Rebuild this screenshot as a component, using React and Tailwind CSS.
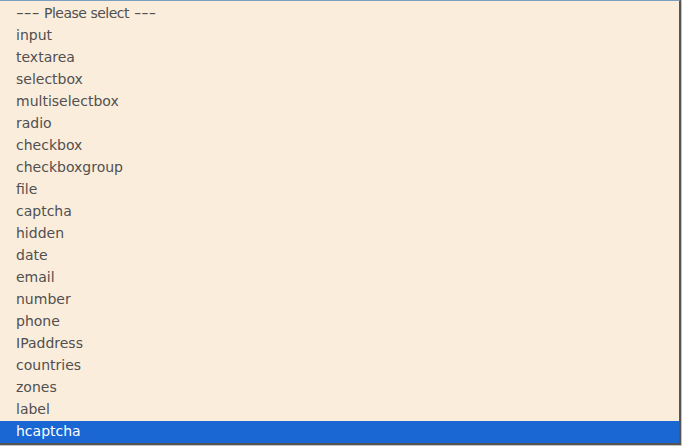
export default function App() {
  const items = [
    "input",
    "textarea",
    "selectbox",
    "multiselectbox",
    "radio",
    "checkbox",
    "checkboxgroup",
    "file",
    "captcha",
    "hidden",
    "date",
    "email",
    "number",
    "phone",
    "IPaddress",
    "countries",
    "zones",
    "label",
    "hcaptcha",
  ];
  const font = { fontFamily: '"DejaVu Sans", sans-serif' };
  return (
    <div className="w-[682px] h-[446px] bg-[#c4c4c4] overflow-hidden">
      <div className="w-[681px] bg-[#fbeddc] border-t border-t-[#7c9cc0] border-r-2 border-r-[#555555] border-b-2 border-b-[#555555] pt-[2px]">
        <div
          className="h-[22px] flex items-center pb-[2px] pl-[16px] text-[14px] text-[#505050]"
          style={font}
        >
          <span className="inline-block w-[24px] origin-left scale-x-[1.55]">---</span>
          <span className="ml-[4px] tracking-[-0.5px]">Please select</span>
          <span className="ml-[5px] inline-block w-[22px] origin-left scale-x-[1.45]">---</span>
        </div>
        {items.map((it, i) => {
          const sel = i === items.length - 1;
          return (
            <div
              key={it}
              className={
                "h-[22px] flex items-center pb-[2px] pl-[16px] text-[14px] " +
                (sel ? "bg-[#1a66d3] text-white" : "text-[#505050]")
              }
              style={font}
            >
              {it}
            </div>
          );
        })}
      </div>
    </div>
  );
}
